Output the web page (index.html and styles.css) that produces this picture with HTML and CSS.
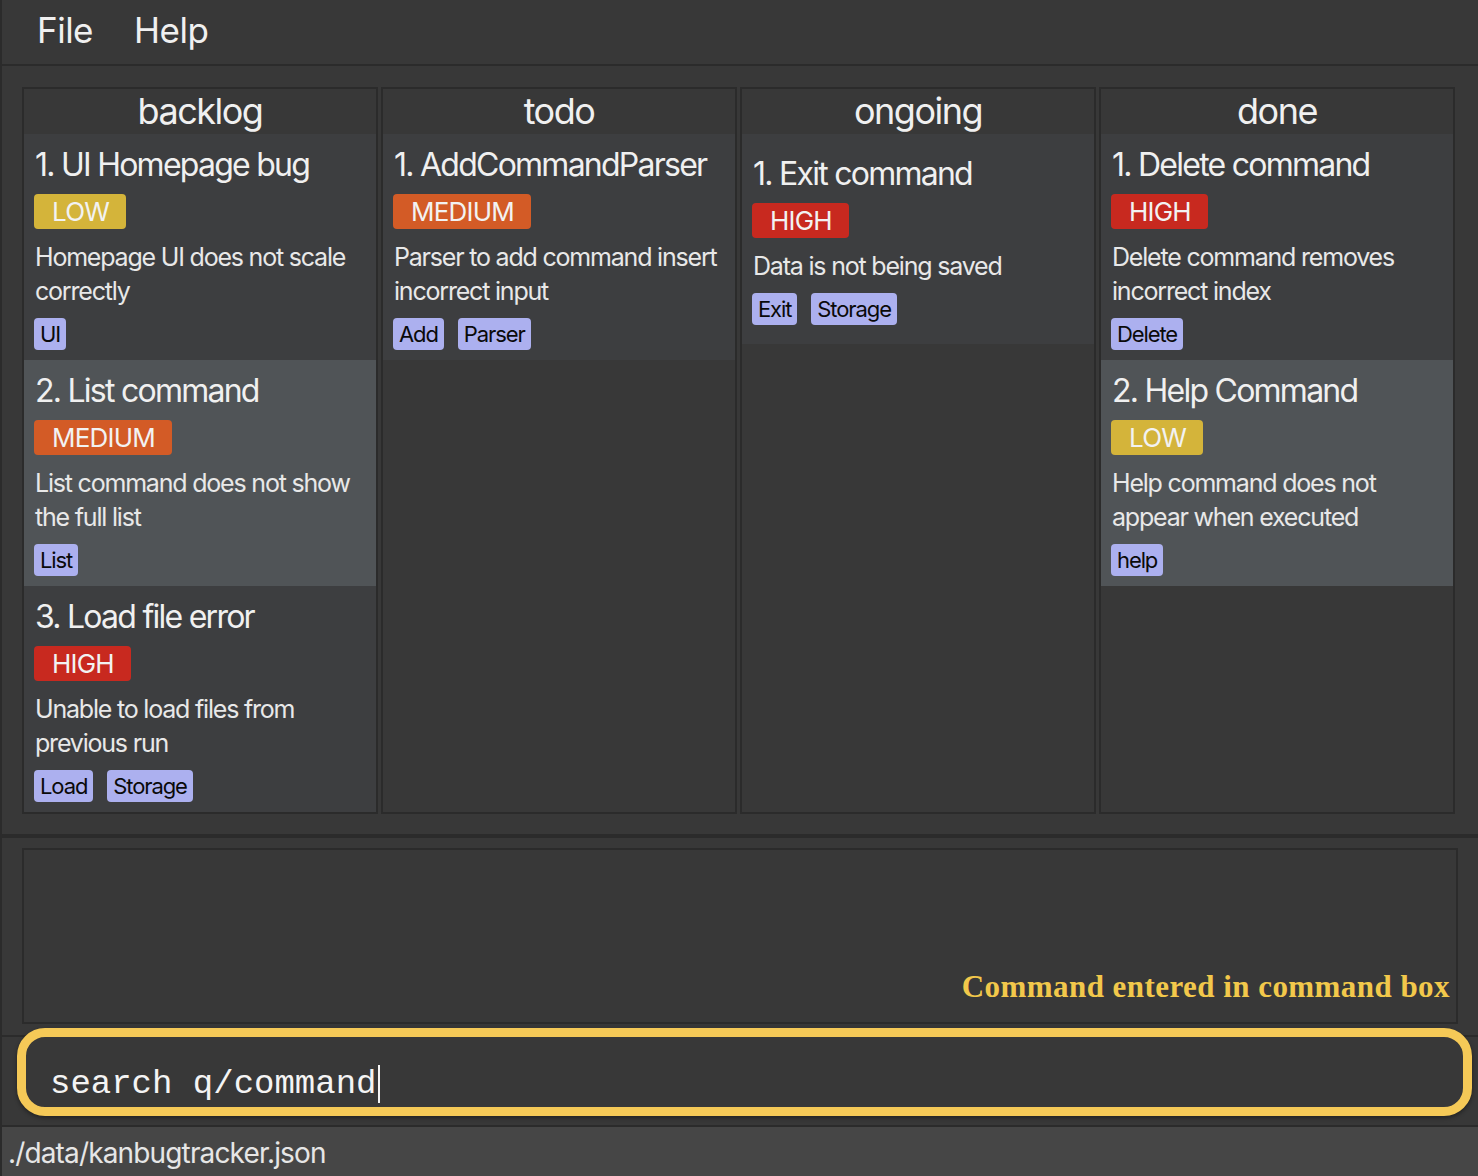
FILE: index.html
```html
<!DOCTYPE html>
<html>
<head>
<meta charset="utf-8">
<link rel="stylesheet" href="styles.css">
</head>
<body>
<div class="window">
  <div class="menubar">
    <span class="menu-item">File</span>
    <span class="menu-item">Help</span>
  </div>
  <div class="board">
    <div class="column">
      <div class="col-header">backlog</div>
      <div class="card">
        <div class="title">1. UI Homepage bug</div>
        <div class="prio low">LOW</div>
        <div class="desc">Homepage UI does not scale correctly</div>
        <div class="tags"><span class="tag">UI</span></div>
      </div>
      <div class="card alt">
        <div class="title">2. List command</div>
        <div class="prio medium">MEDIUM</div>
        <div class="desc">List command does not show the full list</div>
        <div class="tags"><span class="tag">List</span></div>
      </div>
      <div class="card">
        <div class="title">3. Load file error</div>
        <div class="prio high">HIGH</div>
        <div class="desc">Unable to load files from previous run</div>
        <div class="tags"><span class="tag">Load</span><span class="tag">Storage</span></div>
      </div>
    </div>
    <div class="column">
      <div class="col-header">todo</div>
      <div class="card">
        <div class="title">1. AddCommandParser</div>
        <div class="prio medium">MEDIUM</div>
        <div class="desc">Parser to add command insert incorrect input</div>
        <div class="tags"><span class="tag">Add</span><span class="tag">Parser</span></div>
      </div>
    </div>
    <div class="column">
      <div class="col-header">ongoing</div>
      <div class="card">
        <div class="title">1. Exit command</div>
        <div class="prio high">HIGH</div>
        <div class="desc">Data is not being saved</div>
        <div class="tags"><span class="tag">Exit</span><span class="tag">Storage</span></div>
      </div>
    </div>
    <div class="column">
      <div class="col-header">done</div>
      <div class="card">
        <div class="title">1. Delete command</div>
        <div class="prio high">HIGH</div>
        <div class="desc">Delete command removes incorrect index</div>
        <div class="tags"><span class="tag">Delete</span></div>
      </div>
      <div class="card alt">
        <div class="title">2. Help Command</div>
        <div class="prio low">LOW</div>
        <div class="desc">Help command does not appear when executed</div>
        <div class="tags"><span class="tag">help</span></div>
      </div>
    </div>
  </div>
  <div class="result-area">
    <div class="result-box">
      <span class="annotation">Command entered in command box</span>
    </div>
  </div>
  <div class="command-area">
    <div class="command-box">
      <span class="command-text">search q/command</span><span class="caret"></span>
    </div>
  </div>
  <div class="statusbar">./data/kanbugtracker.json</div>
</div>
</body>
</html>
```

FILE: styles.css
```css
html, body {
  margin: 0;
  padding: 0;
}
body {
  width: 1478px;
  height: 1176px;
  overflow: hidden;
  background: #383838;
  font-family: Inter, "Noto Sans", sans-serif;
  color: #ececec;
}
.window {
  height: 1176px;
  box-sizing: border-box;
  border-left: 2px solid #2b2b2b;
  display: flex;
  flex-direction: column;
}
.menubar {
  height: 66px;
  flex: none;
  box-sizing: border-box;
  display: flex;
  align-items: center;
  gap: 41px;
  padding: 0 0 4px 35px;
  border-bottom: 2px solid #2b2b2b;
  font-size: 35px;
  letter-spacing: -0.5px;
  color: #f0f0f0;
}
.board {
  flex: none;
  height: 772px;
  box-sizing: border-box;
  padding: 21px 23px 20px 20px;
  display: grid;
  grid-template-columns: repeat(4, 1fr);
  column-gap: 3px;
  border-bottom: 4px solid #2b2b2b;
}
.column {
  border: 2px solid #2b2b2b;
  background: #383838;
  display: flex;
  flex-direction: column;
  min-width: 0;
}
.col-header {
  height: 45px;
  flex: none;
  text-align: center;
  font-size: 36px;
  line-height: 45px;
  letter-spacing: -1.5px;
  color: #f0f0f0;
}
.card {
  background: #3d3e40;
  display: flex;
  flex-direction: column;
  align-items: flex-start;
  justify-content: center;
  min-height: 210px;
  box-sizing: border-box;
  padding: 9px 6px 10px 10px;
}
.card.alt {
  background: #505457;
}
.title {
  font-size: 32px;
  line-height: 44px;
  letter-spacing: -1.75px;
  color: #f0f0f0;
  white-space: nowrap;
  padding-left: 1px;
}
.prio {
  margin-top: 7px;
  height: 35px;
  line-height: 35px;
  padding: 0 17px 0 18px;
  font-size: 26px;
  letter-spacing: -0.8px;
  border-radius: 4px;
  color: #f2f2f2;
}
.prio.low { background: #d4b43a; }
.prio.medium { background: #d35b26; }
.prio.high { background: #c8291f; }
.desc {
  margin-top: 11px;
  font-size: 25px;
  line-height: 34px;
  letter-spacing: -1.2px;
  color: #e8e8e8;
  padding-left: 1px;
}
.tags {
  margin-top: 10px;
  display: flex;
  gap: 14px;
}
.tag {
  height: 32px;
  line-height: 32px;
  padding: 0 6px;
  font-size: 22px;
  letter-spacing: -1.1px;
  color: #0a0a0a;
  background: #acb0ef;
  border-radius: 4px;
}
.result-area {
  flex: none;
  height: 190px;
  box-sizing: border-box;
  padding: 10px 20px 4px 20px;
  display: flex;
}
.result-box {
  flex: 1;
  border: 2px solid #2b2b2b;
  display: flex;
  align-items: flex-end;
  justify-content: flex-end;
  padding: 0 6px 17px 0;
}
.annotation {
  font-family: "Liberation Serif", "Times New Roman", serif;
  font-weight: bold;
  font-size: 31px;
  color: #f2c84b;
  letter-spacing: 0.45px;
}
.command-area {
  flex: none;
  height: 99px;
  box-sizing: border-box;
  padding: 0 6px 9px 15px;
  display: flex;
  background: linear-gradient(#2b2b2b, #2b2b2b) 0 7px / 100% 2px no-repeat, #383838;
  border-bottom: 2px solid #2b2b2b;
}
.command-box {
  flex: 1;
  box-sizing: border-box;
  border: 9px solid #f5c957;
  border-radius: 28px;
  background: #383838;
  box-shadow: 0 2px 4px rgba(0,0,0,0.4);
  display: flex;
  align-items: center;
  padding: 23px 0 0 24px;
}
.command-text {
  font-family: "Liberation Mono", "Courier New", monospace;
  font-size: 34px;
  color: #f4f4f4;
  white-space: pre;
}
.caret {
  width: 2px;
  height: 38px;
  background: #f4f4f4;
  margin-left: 2px;
  margin-top: 0;
}
.statusbar {
  flex: 1;
  background: #464646;
  font-size: 28px;
  line-height: 52px;
  letter-spacing: -0.85px;
  padding-left: 6px;
  color: #e6e6e6;
}
```
